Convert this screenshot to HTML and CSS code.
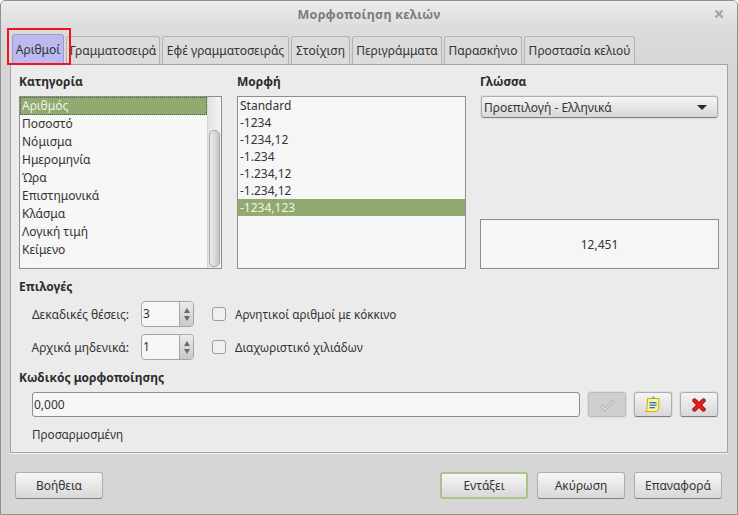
FILE: index.html
```html
<!DOCTYPE html>
<html lang="el">
<head>
<meta charset="utf-8">
<title>Μορφοποίηση κελιών</title>
<link rel="stylesheet" href="styles.css">
</head>
<body>
<div class="window">
  <header class="titlebar">
    <span class="title">Μορφοποίηση κελιών</span>
    <svg class="close" width="10" height="10" viewBox="0 0 10 10"><path d="M1.500 1.500l7 7M8.500 1.500l-7 7" stroke="#a6a6a6" stroke-width="2.400"/></svg>
  </header>
  <nav class="tabs">
    <div class="tab active">Αριθμοί</div>
    <div class="tab t2">Γραμματοσειρά</div>
    <div class="tab t3">Εφέ γραμματοσειράς</div>
    <div class="tab t4">Στοίχιση</div>
    <div class="tab t5">Περιγράμματα</div>
    <div class="tab t6">Παρασκήνιο</div>
    <div class="tab t7">Προστασία κελιού</div>
  </nav>
  <main class="panel">
    <div class="columns">
      <section class="col col-cat">
        <h2 class="heading">Κατηγορία</h2>
        <div class="listbox cat">
          <div class="items">
            <div class="item selected dotted">Αριθμός</div>
            <div class="item">Ποσοστό</div>
            <div class="item">Νόμισμα</div>
            <div class="item">Ημερομηνία</div>
            <div class="item">Ώρα</div>
            <div class="item">Επιστημονικά</div>
            <div class="item">Κλάσμα</div>
            <div class="item">Λογική τιμή</div>
            <div class="item">Κείμενο</div>
          </div>
          <div class="scrolltrack"><div class="thumb"></div></div>
        </div>
      </section>
      <section class="col col-fmt">
        <h2 class="heading">Μορφή</h2>
        <div class="listbox fmt">
          <div class="items">
            <div class="item compact">Standard</div>
            <div class="item compact">-1234</div>
            <div class="item compact">-1234,12</div>
            <div class="item compact">-1.234</div>
            <div class="item compact">-1.234,12</div>
            <div class="item compact">-1.234,12</div>
            <div class="item compact selected">-1234,123</div>
          </div>
        </div>
      </section>
      <section class="col col-lang">
        <h2 class="heading">Γλώσσα</h2>
        <div class="combo"><span>Προεπιλογή - Ελληνικά</span><i class="arrow"></i></div>
        <div class="preview">12,451</div>
      </section>
    </div>

    <h2 class="heading options-head">Επιλογές</h2>
    <div class="opt-row">
      <label class="opt-label">Δεκαδικές θέσεις:</label>
      <div class="spin"><span class="spin-val">3</span><span class="spin-btns"><i class="up"></i><i class="down"></i></span></div>
      <span class="check"></span><span class="check-label">Αρνητικοί αριθμοί με κόκκινο</span>
    </div>
    <div class="opt-row second">
      <label class="opt-label">Αρχικά μηδενικά:</label>
      <div class="spin"><span class="spin-val">1</span><span class="spin-btns"><i class="up"></i><i class="down"></i></span></div>
      <span class="check"></span><span class="check-label">Διαχωριστικό χιλιάδων</span>
    </div>

    <h2 class="heading code-head">Κωδικός μορφοποίησης</h2>
    <div class="code-row">
      <div class="code-input">0,000</div>
      <button class="icon-btn disabled"><svg width="26" height="18" viewBox="0 0 26 18"><path d="M7 9.500l4 4 9-9" fill="none" stroke="#b4b4b4" stroke-width="3.200"/><path d="M7 9.500l4 4 9-9" fill="none" stroke="#d9d9d9" stroke-width="1.400"/></svg></button>
      <button class="icon-btn"><svg width="16" height="18" viewBox="0 0 16 18"><path d="M2.500 2.500h11.500l-.5 11-2 2h-11l1.500-2z" fill="#fbf3a4" stroke="#cbb000"/><rect x="4.500" y="6" width="7" height="1.300" fill="#2f6fc4"/><rect x="4.500" y="8.500" width="7" height="1.300" fill="#2f6fc4"/><rect x="4.500" y="11" width="5.500" height="1.300" fill="#2f6fc4"/><circle cx="8.500" cy="1.800" r="1.300" fill="#9a9a9a"/></svg></button>
      <button class="icon-btn"><svg width="14" height="14" viewBox="0 0 14 14"><path d="M2.500 2.500l9 9M11.500 2.500l-9 9" stroke="#8e0f0f" stroke-width="4.400" stroke-linecap="round"/><path d="M2.500 2.500l9 9M11.500 2.500l-9 9" stroke="#ee1c1c" stroke-width="2.800" stroke-linecap="round"/></svg></button>
    </div>
    <div class="custom">Προσαρμοσμένη</div>
  </main>
  <footer class="footer">
    <button class="btn">Βοήθεια</button>
    <div class="spacer"></div>
    <button class="btn default">Εντάξει</button>
    <button class="btn">Ακύρωση</button>
    <button class="btn">Επαναφορά</button>
  </footer>
  <div class="tab-highlight"></div>
</div>
</body>
</html>
```
FILE: styles.css
```css
* { box-sizing: border-box; }
html, body { margin: 0; padding: 0; }
body {
  width: 738px;
  height: 515px;
  overflow: hidden;
  background: #fff;
  font-family: "Noto Sans", "Open Sans", sans-serif;
  font-size: 12px;
  color: #333;
}
.window {
  position: relative;
  width: 738px;
  height: 515px;
  display: flex;
  flex-direction: column;
  background: #d6d6d6;
  border: 1px solid #8f8f8f;
  border-radius: 5px 5px 0 0;
  overflow: hidden;
}
.titlebar {
  height: 27px;
  flex: none;
  position: relative;
  display: flex;
  align-items: center;
  justify-content: center;
  background: linear-gradient(#ececec, #dcdcdc);
}
.title {
  font-weight: 700;
  font-size: 12.500px;
  color: #7c7c7c;
  letter-spacing: .25px;
}
.close { position: absolute; right: 13px; top: 8px; }
.tabs {
  flex: none;
  display: flex;
  height: 36px;
  padding: 0 0 0 11px;
  gap: 2px;
  align-items: flex-end;
  background: linear-gradient(#dcdcdc, #d6d6d6);
}
.tab {
  height: 28px;
  display: flex;
  align-items: center;
  justify-content: center;
  color: #333;
  background: #dcdcdc;
  border: 1px solid #b4b4b4;
  border-bottom: 0;
  border-radius: 3px 3px 0 0;
  white-space: nowrap;
}
.tab.active {
  width: 52px;
  height: 30px;
  background: #babaef;
  border-color: #9a9ad0;
}
.t2 { width: 94px; }
.t3 { width: 127px; }
.t4 { width: 59px; }
.t5 { width: 90px; }
.t6 { width: 78px; }
.t7 { width: 111px; }
.tab-highlight {
  position: absolute;
  left: 6px;
  top: 27px;
  width: 64px;
  height: 37px;
  border: 2px solid #f0141e;
}
.panel {
  flex: none;
  height: 389px;
  margin: 0 9px;
  padding: 8px 8px 0;
  background: #ebebeb;
  border: 1px solid #a2a2a2;
  box-shadow: 0 1px 0 #f4f4f4;
  display: flex;
  flex-direction: column;
}
.columns { display: flex; height: 197px; flex: none; }
.col { display: flex; flex-direction: column; }
.col-cat { width: 203px; margin-right: 15px; }
.col-fmt { width: 229px; margin-right: 14px; }
.col-lang { width: 239px; }
.heading {
  margin: 0;
  font-size: 12px;
  font-weight: 700;
  line-height: 17px;
  color: #2d2d2d;
}
.listbox {
  margin-top: 6px;
  height: 173px;
  background: #f6f6f6;
  border: 1px solid #8e8e8e;
  display: flex;
}
.items { flex: 1; min-width: 0; }
.item {
  height: 18px;
  line-height: 17px;
  padding-left: 2px;
  color: #333;
  white-space: nowrap;
}
.item.compact { height: 17px; line-height: 17px; }
.item.selected { background: #91aa6f; color: #f0f4e4; }
.item.dotted { outline: 1px dotted #4f5a50; outline-offset: -1px; }
.scrolltrack {
  width: 14px;
  flex: none;
  border-left: 1px solid #d4d4d4;
  padding: 33px 1px 1px 1px;
  background-image: linear-gradient(90deg, #e2e2e2, #f4f4f4);
}
.thumb {
  height: 137px;
  background: linear-gradient(90deg, #ececec, #c8c8c8);
  border: 1px solid #a8a8a8;
  border-radius: 5px;
}
.combo {
  margin: 6px 1px 0;
  height: 22px;
  padding: 0 10px 0 2px;
  display: flex;
  align-items: center;
  justify-content: space-between;
  border: 1px solid #aeaeae;
  border-bottom-color: #7e7e7e;
  border-radius: 3px;
  background: linear-gradient(#f6f6f6, #d8d8d8);
  box-shadow: 0 0 0 1px #dcdcdc;
  color: #333;
}
.arrow {
  width: 0; height: 0;
  border-left: 5px solid transparent;
  border-right: 5px solid transparent;
  border-top: 5px solid #2c2c2c;
}
.preview {
  margin-top: 101px;
  height: 50px;
  display: flex;
  align-items: center;
  justify-content: center;
  background: #f6f6f6;
  border: 1px solid #8e8e8e;
  color: #333;
}
.options-head { margin-top: 8px; }
.opt-row {
  display: flex;
  align-items: center;
  height: 26px;
  margin-top: 6px;
}
.opt-row.second { margin-top: 7px; }
.opt-label {
  width: 110px;
  flex: none;
  text-align: right;
  color: #333;
  white-space: nowrap;
}
.spin {
  margin-left: 12px;
  width: 53px;
  height: 26px;
  display: flex;
  background: #f6f6f6;
  border: 1px solid #a6a6a6;
  border-radius: 4px;
  overflow: hidden;
}
.spin-val { flex: 1; padding-left: 1px; line-height: 24px; }
.spin-btns {
  width: 14px;
  flex: none;
  display: flex;
  flex-direction: column;
  align-items: center;
  justify-content: center;
  gap: 3px;
  background: linear-gradient(#ececec, #c8c8c8);
  border-left: 1px solid #a6a6a6;
}
.up, .down { width: 0; height: 0; border-left: 3.500px solid transparent; border-right: 3.500px solid transparent; }
.up { border-bottom: 5px solid #6a6a6a; }
.down { border-top: 5px solid #6a6a6a; }
.check {
  margin-left: 18px;
  width: 14px;
  height: 14px;
  flex: none;
  background: #f0f0f0;
  border: 1px solid #9c9c9c;
  border-radius: 3px;
}
.check-label { margin-left: 9px; white-space: nowrap; font-size: 11.700px; }
.code-head { margin-top: 9px; }
.code-row {
  display: flex;
  align-items: center;
  margin-top: 6px;
  margin-left: 13px;
  height: 25px;
  gap: 8px;
}
.code-input {
  width: 548px;
  height: 25px;
  line-height: 23px;
  padding-left: 1px;
  background: #f6f6f6;
  border: 1px solid #8e8e8e;
  border-radius: 3px;
}
.icon-btn {
  width: 38px;
  height: 25px;
  padding: 0;
  display: flex;
  align-items: center;
  justify-content: center;
  border: 1px solid #aeaeae;
  border-bottom-color: #7e7e7e;
  border-radius: 3px;
  background: linear-gradient(#f4f4f4, #d8d8d8);
  box-shadow: 0 0 0 1px #dcdcdc;
}
.icon-btn.disabled { background: #cfcfcf; border-color: #bcbcbc; }
.custom { margin-top: 9px; margin-left: 13px; font-size: 11.700px; }
.footer {
  flex: 1;
  display: flex;
  align-items: flex-start;
  padding: 19px 15px 0 14px;
  gap: 9px;
}
.spacer { flex: 1; }
.btn {
  width: 88px;
  height: 27px;
  padding: 0;
  font: inherit;
  color: #333;
  border: 1px solid #aeaeae;
  border-bottom-color: #7e7e7e;
  border-radius: 3px;
  background: linear-gradient(#f6f6f6, #d8d8d8);
}
.btn.default { border: 2px solid #a9c48b; }
```
